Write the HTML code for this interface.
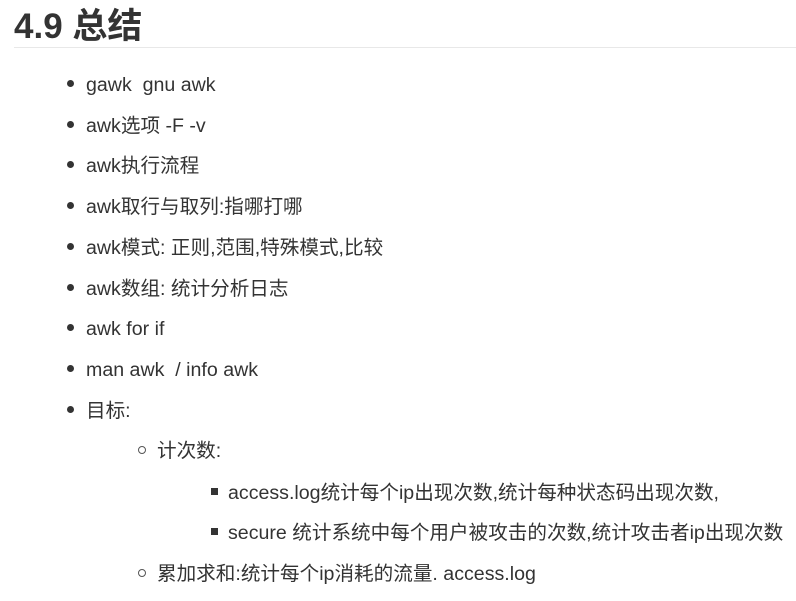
<!DOCTYPE html>
<html><head><meta charset="utf-8"><style>
body{margin:0;width:796px;height:601px;background:#fff;overflow:hidden;font-family:"Liberation Sans","Noto Sans CJK SC",sans-serif;color:#333;}
h1{position:absolute;left:14px;top:5px;margin:0;font-size:35px;font-weight:bold;line-height:44px;color:#333;}
.hr{position:absolute;left:14px;right:0;top:47px;height:1px;background:#e8e8e8;}
.l{position:absolute;font-size:19.6px;line-height:24px;white-space:nowrap;}
.d{position:absolute;width:7px;height:7px;border-radius:50%;background:#333;}
.c{position:absolute;width:8px;height:8px;border-radius:50%;border:1px solid #555;box-sizing:border-box;}
.s{position:absolute;width:7px;height:7px;background:#333;}
</style></head><body>
<h1>4.9 总结</h1>
<div class="hr"></div>
<div class="d" style="left:67px;top:80px"></div><div class="l" style="left:86px;top:73px">gawk&nbsp; gnu awk</div>
<div class="d" style="left:67px;top:121px"></div><div class="l" style="left:86px;top:114px">awk选项 -F -v</div>
<div class="d" style="left:67px;top:161px"></div><div class="l" style="left:86px;top:154px">awk执行流程</div>
<div class="d" style="left:67px;top:202px"></div><div class="l" style="left:86px;top:195px">awk取行与取列:指哪打哪</div>
<div class="d" style="left:67px;top:243px"></div><div class="l" style="left:86px;top:236px">awk模式: 正则,范围,特殊模式,比较</div>
<div class="d" style="left:67px;top:284px"></div><div class="l" style="left:86px;top:277px">awk数组: 统计分析日志</div>
<div class="d" style="left:67px;top:324px"></div><div class="l" style="left:86px;top:317px">awk for if</div>
<div class="d" style="left:67px;top:365px"></div><div class="l" style="left:86px;top:358px">man awk&nbsp; / info awk</div>
<div class="d" style="left:67px;top:406px"></div><div class="l" style="left:86px;top:399px">目标:</div>
<div class="c" style="left:138px;top:446px"></div><div class="l" style="left:157px;top:439px">计次数:</div>
<div class="s" style="left:211px;top:488px"></div><div class="l" style="left:228px;top:481px">access.log统计每个ip出现次数,统计每种状态码出现次数,</div>
<div class="s" style="left:211px;top:528px"></div><div class="l" style="left:228px;top:521px">secure 统计系统中每个用户被攻击的次数,统计攻击者ip出现次数</div>
<div class="c" style="left:138px;top:569px"></div><div class="l" style="left:157px;top:562px">累加求和:统计每个ip消耗的流量. access.log</div>
</body></html>
